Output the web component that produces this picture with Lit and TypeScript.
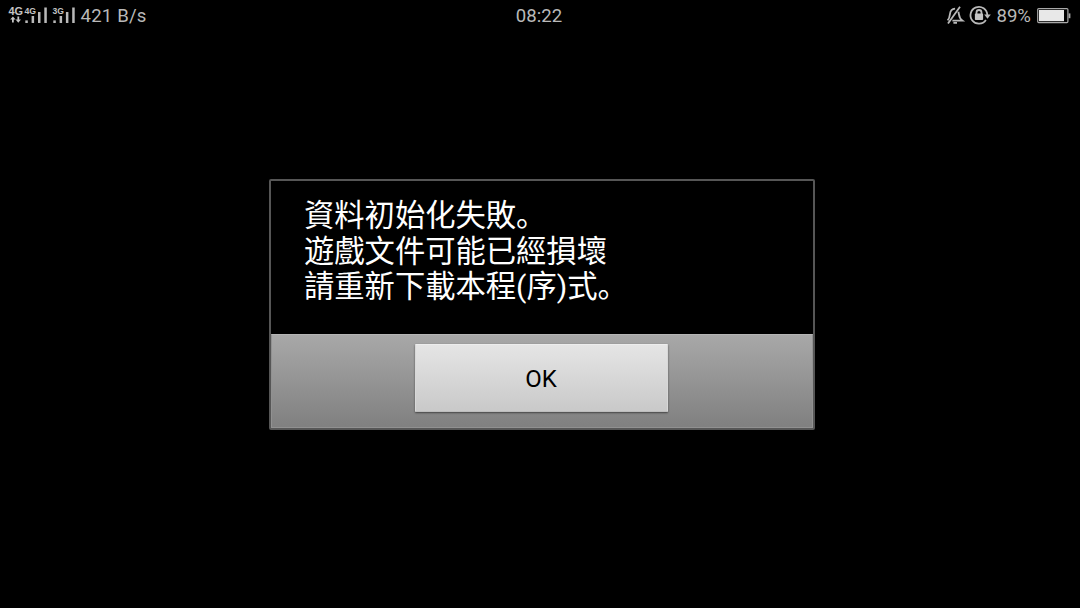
import { LitElement, html, css, svg } from "lit";
import { customElement } from "lit/decorators.js";

@customElement("status-bar")
class StatusBar extends LitElement {
  static styles = css`
    :host {
      display: grid;
      grid-template-columns: 1fr auto 1fr;
      align-items: center;
      height: 32px;
      color: #b9b9b9;
      font: 400 18.6px/32px Roboto, sans-serif;
    }
    .left, .right { display: flex; align-items: center; height: 32px; }
    .right { justify-content: flex-end; }
    .left svg { flex: none; }
    svg { display: block; }
    .speed { margin-left: 0.6px; letter-spacing: 0.15px; }
    .clock { margin-right: 2px; }
    .pct { margin: 0 5px 0 4px; }
    .net { font: 700 9px "Liberation Sans", sans-serif; }
    .big { font-size: 11px; }
  `;
  render() {
    const bar = (x: number, y: number) =>
      svg`<rect x=${x} y=${y} width="2.5" height=${23 - y} fill="#b9b9b9"/>`;
    return html`
      <div class="left">
        <svg width="80" height="32" fill="#c4c4c4">
          <text class="net big" x="8.5" y="15.4" textLength="14.6" lengthAdjust="spacingAndGlyphs">4G</text>
          <text class="net" x="24.4" y="13.8" textLength="11.6" lengthAdjust="spacingAndGlyphs">4G</text>
          <path d="M12.9 16.4l2.7 3.2h-1.8v3h-1.8v-3h-1.8zM18.3 22.7l-2.7-3.2h1.8v-3h1.8v3h1.8z"/>
          ${bar(25.3, 20.4)}${bar(31.6, 16)}${bar(38, 12)}${bar(44.3, 7.5)}
          <text class="net" x="52.6" y="13.8" textLength="11.4" lengthAdjust="spacingAndGlyphs">3G</text>
          ${bar(53.3, 20.4)}${bar(59.6, 16)}${bar(65.9, 12)}${bar(72.2, 7.5)}
        </svg>
        <span class="speed">421 B/s</span>
      </div>
      <span class="clock">08:22</span>
      <div class="right">
        <svg width="46" height="32" fill="none" stroke="#b9b9b9" stroke-width="1.8">
          <path d="M1.6 20.4c1.8-1.8 2-3.4 2.3-6.1.4-3.6 1.9-5.4 5.2-5.6M12.4 11.7c.9 3.8.4 6.5 3.9 8.9H6.4M14 6.8L2 23.6M7.4 22.8h3.6"/>
          <path d="M39.9 19.9A8.4 8.4 0 1 1 41.3 15"/>
          <path d="M38.2 14.4h6.6L41.5 18.8z" fill="#b9b9b9" stroke="none"/>
          <path d="M30.5 14.5v-2a2.5 2.5 0 0 1 5 0v2"/>
          <rect x="28.9" y="13.6" width="8.2" height="6.4" rx=".8" fill="#c4c4c4" stroke="none"/>
        </svg>
        <span class="pct">89%</span>
        <svg width="44" height="32">
          <rect x="1.7" y="8.6" width="30.2" height="14" rx="1" fill="none" stroke="#a8a8a8" stroke-width="1.2"/>
          <rect x="3" y="10" width="25" height="11.2" fill="#e8e8e8"/>
          <rect x="32.6" y="13.4" width="1.8" height="4.8" fill="#a8a8a8"/>
        </svg>
      </div>
    `;
  }
}

@customElement("alert-dialog")
class AlertDialog extends LitElement {
  static styles = css`
    :host {
      display: flex;
      flex-direction: column;
      box-sizing: border-box;
      width: 546px;
      height: 251px;
      border: 2px solid #565656;
      border-radius: 2px;
      background: #000;
    }
    .message {
      flex: 1;
      padding: 15px 0 0 33px;
      color: #fff;
      font: 400 30.3px/35.6px "Noto Sans CJK SC", sans-serif;
      white-space: nowrap;
    }
    .latin { font-family: Roboto, sans-serif; }
    .bar {
      display: flex;
      justify-content: center;
      box-sizing: border-box;
      height: 94px;
      padding: 9px 1px 0 0;
      border: 1px solid #919191;
      border-top-color: #b5b5b5;
      background: linear-gradient(#a8a8a8, #808080);
    }
    button {
      box-sizing: border-box;
      width: 253px;
      height: 68px;
      padding: 1px 1px 0 0;
      border: 1px solid #d8d8d8;
      border-top-color: #ededed;
      border-bottom-color: #bdbdbd;
      border-radius: 1px;
      background: linear-gradient(#e5e5e5, #c9c9c9);
      box-shadow: 0 1px 2px #444;
      color: #000;
      font: 400 24px/66px Roboto, sans-serif;
    }
  `;
  render() {
    return html`
      <div class="message">資料初始化失敗。<br>遊戲文件可能已經損壞<br>請重新下載本程<span class="latin">(</span>序<span class="latin">)</span>式。</div>
      <div class="bar"><button>OK</button></div>
    `;
  }
}

@customElement("app-root")
class AppRoot extends LitElement {
  static styles = css`
    :host {
      display: flex;
      flex-direction: column;
      height: 608px;
      overflow: hidden;
      background: #000;
    }
    .stage { display: flex; justify-content: center; padding: 147px 0 0 4px; }
  `;
  render() {
    return html`
      <status-bar></status-bar>
      <main class="stage"><alert-dialog></alert-dialog></main>
    `;
  }
}
